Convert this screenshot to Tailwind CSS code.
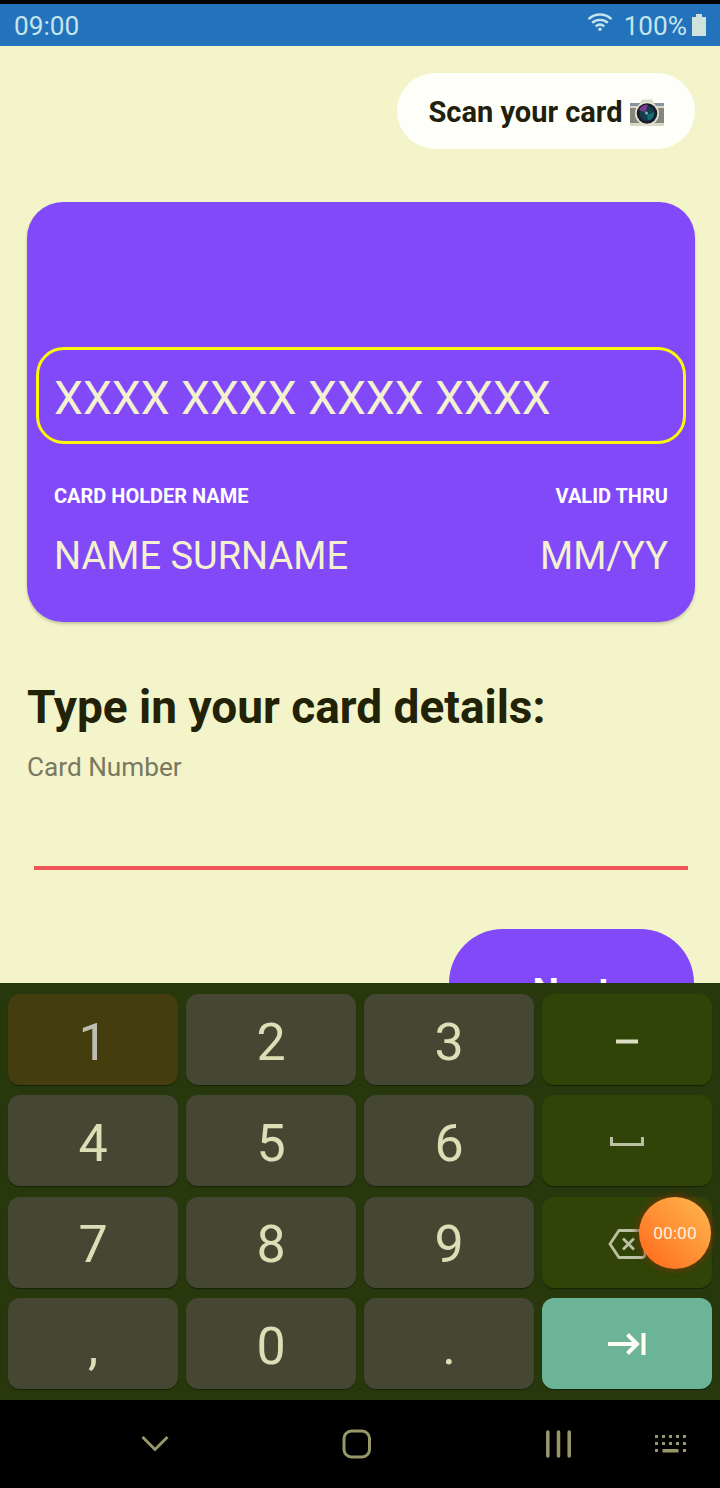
<!DOCTYPE html>
<html lang="en">
<head>
<meta charset="utf-8">
<title>Card details</title>
<script src="https://cdn.jsdelivr.net/npm/@tailwindcss/browser@4"></script>
</head>
<body class="w-[720px] h-[1488px] overflow-hidden bg-black font-[Roboto,sans-serif]">
<div class="flex flex-col w-[720px] h-[1488px] pt-1">
  <header class="h-[42px] shrink-0 bg-[#2273bc] flex items-center pl-[14px] pr-[14px] text-[26.2px] leading-[42px] text-[#c6e4ec]">
    <span class="pt-[1px]">09:00</span>
    <svg class="ml-auto mr-[11px] -mt-[4px]" width="26" height="20" viewBox="0 0 26 20" fill="none" stroke="#c6e4ec" stroke-width="2.300">
      <path d="M1.500 6.200C8-.1 18-.1 24.500 6.200M5.200 9.800C9.500 5.800 16.500 5.800 20.800 9.800M8.700 13.300C11.300 11.100 14.700 11.100 17.300 13.300"/>
      <circle cx="13" cy="16.300" r="1.700" fill="#c6e4ec" stroke="none"/>
    </svg>
    <span class="pt-[1px] mr-[5px]">100%</span>
    <svg class="-mt-px" width="14" height="22" viewBox="0 0 14 22" fill="#cfe3dc"><path d="M4 0h6v3h4v19H0V3h4z"/></svg>
  </header>

  <main class="h-[937px] shrink-0 overflow-hidden bg-[#f4f4ca] pl-[27px] pr-[25px] pt-[27px] flex flex-col">
    <button class="self-end w-[298px] h-[76px] shrink-0 rounded-full bg-[#fffffa] flex items-center justify-center gap-[7px] text-[29px] font-bold text-[#20200c] pt-[3px]">
      <span>Scan your card</span>
      <svg width="34" height="30" viewBox="0 0 34 30">
        <path d="M10 5l2-3.500h10L24 5h10v23H0V5z" fill="#d8d8c4"/>
        <path d="M0 5h10v3H0zM24 5h10v3H24z" fill="#8494a0"/>
        <path d="M0 10h34v15H0z" fill="#86867a"/>
        <circle cx="17" cy="15.500" r="12" fill="#e5e5d6"/>
        <circle cx="17" cy="15.500" r="10.300" fill="#1b1b2b"/>
        <circle cx="17" cy="15.500" r="7.500" fill="#173c4c"/>
        <path d="M9 12c2-4 6-6 9-5l-3 7z" fill="#7e3c92"/>
        <path d="M17 17l7-3c0 5-2 8-6 8z" fill="#147078"/>
        <circle cx="16.500" cy="15" r="1.500" fill="#7eb5c0"/>
      </svg>
    </button>

    <section class="mt-[53px] h-[420px] shrink-0 rounded-[36px] bg-[#8149f8] shadow-[0_2px_3px_rgba(60,60,40,0.25)] pt-[145px] px-[9px] text-[#f3f1d0]">
      <div class="h-[97px] border-[3px] border-[#fbf707] rounded-[28px] pl-[15px] flex items-center pt-[6px] text-[46.1px] whitespace-nowrap">XXXX XXXX XXXX XXXX</div>
      <div class="px-[18px] pt-[39px] flex justify-between text-[20px] leading-[26px] font-bold text-white">
        <span>CARD HOLDER NAME</span><span>VALID THRU</span>
      </div>
      <div class="px-[18px] pt-[22px] flex justify-between text-[38px] leading-[50px]">
        <span>NAME SURNAME</span><span>MM/YY</span>
      </div>
    </section>

    <h1 class="mt-[56px] text-[46px] leading-[58px] font-bold text-[#222208] whitespace-nowrap">Type in your card details:</h1>
    <label class="mt-[15px] text-[26.2px] leading-[32px] text-[#797961]">Card Number</label>
    <div class="mt-[83px] mx-[7px] h-[4px] shrink-0 bg-[#f0545a]"></div>
    <button class="mt-[59px] mr-px self-end w-[245px] h-[108px] shrink-0 rounded-[54px] bg-[#8149f8] text-white text-[37px] font-bold pt-[18px]">Next</button>
  </main>

  <div class="relative h-[417px] shrink-0 bg-[#26380c] px-2 pt-[11px]">
    <div class="grid grid-cols-4 auto-rows-[91px] gap-x-2 gap-y-[10.4px] text-[52px] text-[#dcdfb5] *:flex *:items-center *:justify-center *:rounded-[12px] *:shadow-[0_1px_1px_rgba(0,0,0,0.4)]">
      <div class="pt-[6px] bg-[#443e0e] text-[#bdbdb0]">1</div><div class="pt-[6px] bg-[#464732]">2</div><div class="pt-[6px] bg-[#464732]">3</div>
      <div class="pt-[4px] bg-[#304407]"><svg width="22" height="5" viewBox="0 0 22 5"><path d="M0 .500h22v4H0z" fill="#dcdfc4"/></svg></div>
      <div class="pt-[6px] bg-[#464732]">4</div><div class="pt-[6px] bg-[#464732]">5</div><div class="pt-[6px] bg-[#464732]">6</div>
      <div class="pt-[2px] bg-[#304407]"><svg width="34" height="10" viewBox="0 0 34 10" fill="none" stroke="#bcc0a4" stroke-width="3"><path d="M1.500 0v7.500h31V0"/></svg></div>
      <div class="pt-[6px] bg-[#464732]">7</div><div class="pt-[6px] bg-[#464732]">8</div><div class="pt-[6px] bg-[#464732]">9</div>
      <div class="pt-[4px] bg-[#304407]"><svg width="40" height="32" viewBox="0 0 40 32" fill="none" stroke="#bcc0a4" stroke-width="2.800"><path d="M12 2.500h23a3 3 0 0 1 3 3v21a3 3 0 0 1-3 3H12L3 16zM16 10.500l11 11M27 10.500l-11 11"/></svg></div>
      <div class="pt-[6px] bg-[#464732]">,</div><div class="pt-[6px] bg-[#464732]">0</div><div class="pt-[6px] bg-[#464732]">.</div>
      <div class="bg-[#6cb498]"><svg width="38" height="24" viewBox="0 0 38 24" fill="none" stroke="#fffff4" stroke-width="4"><path d="M0 12h29M19.500 2.500L29 12l-9.500 9.500M35.500 1v22"/></svg></div>
    </div>
    <div class="absolute left-[639px] top-[214px] size-[72px] rounded-full bg-linear-to-tr from-[#ff6414] to-[#ffb850] shadow-[0_0_5px_3px_rgba(120,50,10,0.6)] text-[17.4px] leading-[72px] text-center text-[#fff0d8]">00:00</div>
  </div>

  <nav class="grow bg-black flex items-center pl-[141px] pr-[32px] text-[#97976a]">
    <svg width="28" height="18" viewBox="0 0 28 18" fill="none" stroke="currentColor" stroke-width="3"><path d="M1.500 2L14 14.500 26.500 2"/></svg>
    <svg class="ml-[173px]" width="30" height="30" viewBox="0 0 30 30" fill="none" stroke="currentColor" stroke-width="3"><rect x="2" y="2" width="25.500" height="26" rx="7.500"/></svg>
    <svg class="ml-[173px]" width="27" height="28" viewBox="0 0 27 28" fill="none" stroke="currentColor" stroke-width="3.500" stroke-linecap="round"><path d="M2.800 2v24M13.500 2v24M24.200 2v24"/></svg>
    <svg class="ml-auto" width="34" height="20" viewBox="0 0 34 20" fill="currentColor"><path d="M1 1h3v3H1zM8 1h3v3H8zM15 1h3v3h-3zM22 1h3v3h-3zM29 1h3v3h-3zM1 8h3v3H1zM8 8h3v3H8zM15 8h3v3h-3zM22 8h3v3h-3zM29 8h3v3h-3zM1 15h3v3H1zM8.500 15h16v3.500h-16zM29 15h3v3h-3z"/></svg>
  </nav>
</div>
</body>
</html>
